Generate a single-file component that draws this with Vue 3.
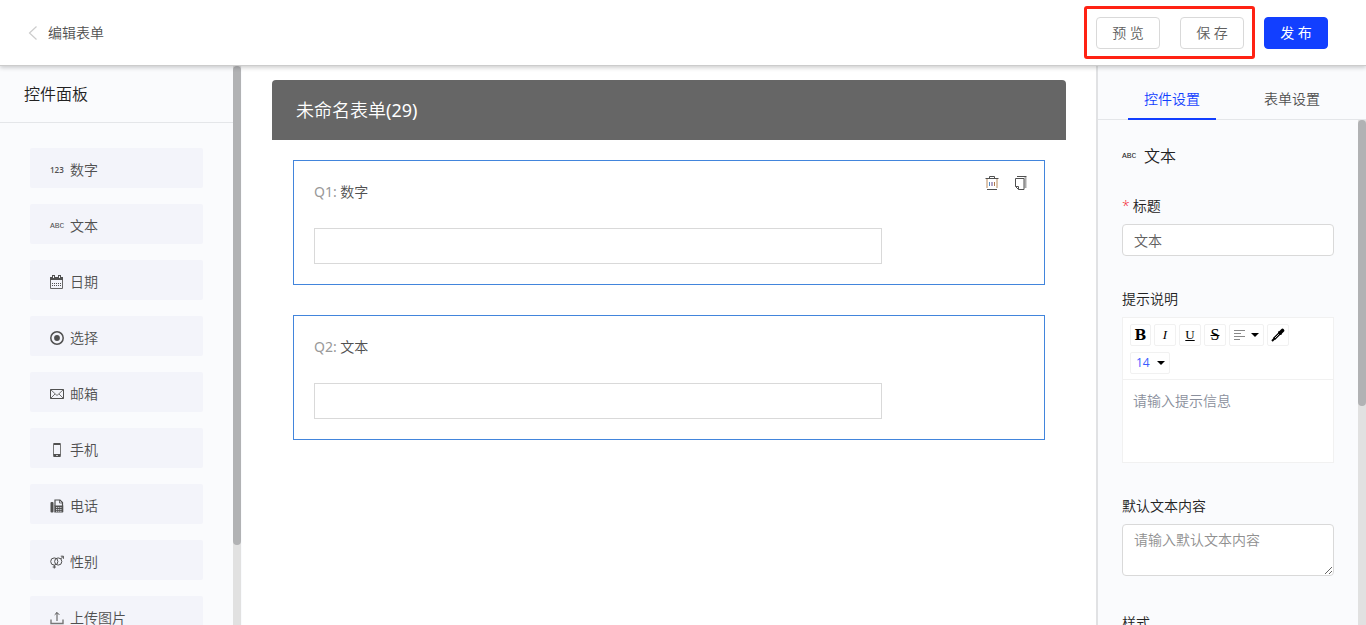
<script setup>
import { ref } from 'vue'

const controls = [
  { id: 'number', label: '数字' },
  { id: 'text', label: '文本' },
  { id: 'date', label: '日期' },
  { id: 'choice', label: '选择' },
  { id: 'mail', label: '邮箱' },
  { id: 'mobile', label: '手机' },
  { id: 'phone', label: '电话' },
  { id: 'gender', label: '性别' },
  { id: 'upload', label: '上传图片' }
]

const questions = [
  { no: 'Q1:', title: '数字', tools: true },
  { no: 'Q2:', title: '文本', tools: false }
]

const tab = ref('control')
const title = ref('文本')
const hint = ref('')
const preset = ref('')
const size = ref('14')
</script>

<template>
  <div class="page">
    <header class="topbar">
      <a class="back" href="#">
        <svg width="10" height="16" viewBox="0 0 10 16"><path d="M8.500 1.500L1.500 8l7 6.500" fill="none" stroke="#ccc" stroke-width="1.200" /></svg>
        <span>编辑表单</span>
      </a>
      <div class="actions">
        <div class="marked">
          <button type="button" class="btn">预 览</button>
          <button type="button" class="btn">保 存</button>
        </div>
        <button type="button" class="btn primary">发 布</button>
      </div>
    </header>

    <div class="body">
      <aside class="palette">
        <div class="palette-main">
          <h2 class="palette-title">控件面板</h2>
          <div class="palette-list">
            <button v-for="c in controls" :key="c.id" type="button" class="control">
              <span v-if="c.id === 'number'" class="glyph wide">123</span>
              <span v-else-if="c.id === 'text'" class="glyph">ABC</span>
              <svg v-else width="14" height="14" viewBox="0 0 14 14" fill="none" stroke="#505050">
                <template v-if="c.id === 'date'">
                  <path d="M.5 2.500h12v11H.5z" stroke="#666" />
                  <path d="M0 2h13v3H0z" fill="#505050" stroke="none" />
                  <path d="M3.500 0v3M9.500 0v3" stroke-width="3" />
                  <path d="M3.500 1v2M9.500 1v2" stroke="#f3f4fa" />
                  <path d="M2 8.500h9M2 10.500h9" stroke-dasharray="1 1" />
                </template>
                <template v-else-if="c.id === 'choice'">
                  <circle cx="7" cy="7" r="6.200" stroke-width="1.500" />
                  <circle cx="7" cy="7" r="2.900" fill="#505050" stroke="none" />
                </template>
                <template v-else-if="c.id === 'mail'">
                  <path d="M.5 2.500h13v9H.5z" />
                  <path d="M.5 2.500L7 8.500l6.500-6M.5 11.500L5 7M13.500 11.500L9 7" stroke-width=".8" />
                </template>
                <template v-else-if="c.id === 'mobile'">
                  <rect x="3.500" y=".5" width="7" height="13" rx="1" stroke="#777" />
                  <path d="M3.500 1h7" stroke-width="2" />
                  <path d="M3.500 12.500h7" stroke-width="3" />
                  <path d="M6.300 12.500h1.400" stroke="#f3f4fa" />
                </template>
                <template v-else-if="c.id === 'phone'">
                  <rect x=".5" y="3" width="3" height="10.500" rx="1" fill="#505050" stroke="none" />
                  <path d="M5 7V1h5l2.500 2.500V7" stroke-width="1.200" />
                  <path d="M9.500 1v3h3" stroke-width=".8" />
                  <path d="M4.300 6.500h9V13l-.6.600H4.300z" fill="#505050" stroke="none" />
                  <path d="M6 8.500h5.500M6 10.500h5.500M6 12.300h5.500" stroke="#f3f4fa" stroke-width=".8" stroke-dasharray="1.300 .8" />
                </template>
                <template v-else-if="c.id === 'gender'">
                  <circle cx="4.300" cy="6.500" r="3.600" />
                  <circle cx="8.200" cy="6.500" r="3.600" />
                  <path d="M4.300 10v3.500M2.700 12h3.200M10.700 4L13 1.500M10.800 1.200h2.600v2.600" />
                </template>
                <template v-else>
                  <path d="M1 8.500v4h12v-4" stroke="#777" stroke-width="1.400" />
                  <path d="M7 10V1.500M4.700 3.800L7 1.500l2.300 2.300" />
                </template>
              </svg>
              <span>{{ c.label }}</span>
            </button>
          </div>
        </div>
        <div class="track"><div class="thumb thumb-left"></div></div>
      </aside>

      <main class="canvas">
        <h1 class="form-title">未命名表单<span class="count">(29)</span></h1>
        <section v-for="q in questions" :key="q.no" class="card">
          <div class="card-head">
            <label :for="q.no"><span class="no">{{ q.no }}</span> {{ q.title }}</label>
            <div v-if="q.tools" class="card-tools">
              <button type="button" aria-label="删除">
                <svg width="14" height="14" viewBox="0 0 14 14" fill="none" stroke="#505050">
                  <path d="M.5 2.500h13M4.500 2V.5h5V2" />
                  <path d="M2 3v9M12 3v9" stroke="#b98a5c" /><path d="M2 13.500h10" />
                  <path d="M4.500 6v4" stroke="#4f8bc9" /><path d="M7 6v4" stroke="#6a4a8c" /><path d="M9.500 6v4" stroke="#b07a4c" />
                </svg>
              </button>
              <button type="button" aria-label="复制">
                <svg width="14" height="14" viewBox="0 0 14 14" fill="none" stroke="#505050">
                  <path d="M3 .5h9.500" /><path d="M11.500 1v11" stroke="#aaa" stroke-width="2" />
                  <path d="M1.500 2.500h8.500v11H4.500l-3-3z" fill="#fff" />
                  <path d="M1.500 10.500h3v3" />
                </svg>
              </button>
            </div>
          </div>
          <input :id="q.no" class="answer" type="text" />
        </section>
      </main>

      <aside class="settings">
        <nav class="tabs">
          <button type="button" :class="{ active: tab === 'control' }" @click="tab = 'control'">控件设置</button>
          <button type="button" :class="{ active: tab === 'form' }" @click="tab = 'form'">表单设置</button>
        </nav>
        <div class="settings-body">
          <div class="settings-main">
            <h3 class="kind"><span class="glyph">ABC</span>文本</h3>

            <div class="field">
              <label for="title"><span class="star">*</span>标题</label>
              <input id="title" v-model="title" class="box" type="text" />
            </div>

            <div class="field">
              <label for="hint">提示说明</label>
              <div class="editor">
                <div class="toolbar">
                  <button type="button" class="tool bold">B</button>
                  <button type="button" class="tool italic">I</button>
                  <button type="button" class="tool under">U</button>
                  <button type="button" class="tool strike">S</button>
                  <button type="button" class="tool menu" aria-label="对齐">
                    <svg width="26" height="12" viewBox="0 0 26 12"><path d="M0 1.500h11M0 4.500h7M0 7.500h11M0 10.500h6" stroke="#888" /><path d="M17 4h8l-4 4z" fill="#000" /></svg>
                  </button>
                  <button type="button" class="tool" aria-label="颜色">
                    <svg width="14" height="14" viewBox="0 0 14 14"><path d="M3 11l6.500-6.500" stroke="#000" stroke-width="3" /><path d="M4 10l5-5" stroke="#fff" stroke-width=".8" /><path d="M9 5l2.500-2.500" stroke="#000" stroke-width="3.600" stroke-linecap="round" /><path d="M7.500 3.500l3 3" stroke="#000" stroke-width="1.500" /><path d="M1 13l2.500-2.500" stroke="#000" stroke-width="2" /></svg>
                  </button>
                  <div class="size">
                    <select v-model="size" aria-label="字号"><option>14</option><option>16</option></select>
                    <svg width="8" height="4" viewBox="0 0 8 4"><path d="M0 0h8L4 4z" /></svg>
                  </div>
                </div>
                <textarea id="hint" v-model="hint" class="hint" placeholder="请输入提示信息"></textarea>
              </div>
            </div>

            <div class="field">
              <label for="preset">默认文本内容</label>
              <textarea id="preset" v-model="preset" class="box area" placeholder="请输入默认文本内容"></textarea>
            </div>

            <div class="field"><h4>样式</h4></div>
          </div>
          <div class="track"><div class="thumb thumb-right"></div></div>
        </div>
      </aside>
    </div>
  </div>
</template>

<style>
body {
  margin: 0;
}
</style>

<style scoped>
.page {
  display: flex;
  flex-direction: column;
  height: 100vh;
  overflow: hidden;
  background: #fff;
  color: #505050;
  font: 350 14px/22px "Open Sans", "Noto Sans CJK SC", sans-serif;
}
.page *, .page *::before, .page *::after {
  box-sizing: border-box;
}
button, input, textarea, select {
  margin: 0;
  padding: 0;
  border: 0;
  background: none;
  color: inherit;
  font: inherit;
  outline: none;
}
h1, h2, h3, h4 {
  margin: 0;
  font-weight: 350;
}
svg {
  display: block;
  flex: none;
}
.topbar {
  position: relative;
  z-index: 1;
  flex: none;
  display: flex;
  align-items: center;
  justify-content: space-between;
  height: 66px;
  padding: 0 38px 0 28px;
  border-bottom: 1px solid #ccc;
  box-shadow: 0 2px 4px rgba(0, 0, 0, .18);
  background: #fff;
}
.back {
  display: flex;
  align-items: center;
  gap: 10px;
  color: #505050;
  text-decoration: none;
}
.actions, .marked {
  display: flex;
  gap: 20px;
}
.marked {
  position: relative;
}
.marked::after {
  content: "";
  position: absolute;
  inset: -11px -11px -10px -12px;
  border: 3px solid #ff2213;
  border-radius: 3px;
  pointer-events: none;
}
.btn {
  width: 64px;
  height: 32px;
  border: 1px solid #d9d9d9;
  border-radius: 4px;
  background: #fff;
  color: #606060;
}
.primary {
  border-color: #123fff;
  background: #123fff;
  color: #fff;
  font-weight: 400;
}
.body {
  flex: 1;
  min-height: 0;
  display: flex;
}
.palette {
  flex: none;
  display: flex;
  width: 242px;
  padding-right: 1px;
  background: #fafbfd;
}
.palette-main {
  flex: 1;
  overflow: hidden;
}
.palette-title {
  height: 57px;
  padding-left: 24px;
  border-bottom: 1px solid #e4e6e9;
  color: #222;
  font-size: 16px;
  line-height: 56px;
}
.palette-list {
  display: flex;
  flex-direction: column;
  gap: 16px;
  padding: 25px 30px;
}
.control {
  display: flex;
  align-items: center;
  gap: 6px;
  height: 40px;
  padding: 4px 20px 0;
  border-radius: 2px;
  background: #f3f4fa;
  text-align: left;
}
.glyph {
  flex: none;
  width: 14px;
  font: 400 8px/14px "Liberation Mono", monospace;
  white-space: nowrap;
}
.wide {
  font-family: "Open Sans", sans-serif;
  font-weight: 600;
}
.track {
  flex: none;
  width: 8px;
  background: #e1e1e1;
}
.thumb {
  border-radius: 4px;
  background: #b1b2b4;
}
.thumb-left {
  height: 85.7%;
}
.thumb-right {
  height: 56.6%;
}
.canvas {
  flex: 1;
  min-width: 0;
  padding: 14px 30px;
}
.form-title {
  height: 60px;
  padding-left: 24px;
  border-radius: 4px 4px 0 0;
  background: #666;
  color: #fff;
  font-size: 18px;
  line-height: 60px;
}
.count, .no {
  font-family: "Noto Sans", sans-serif;
  font-weight: 400;
}
.card {
  margin: 20px 21px 30px;
  padding: 20px;
  border: 1px solid #4285dc;
}
.card + .card {
  margin-top: 0;
}
.card-head {
  display: flex;
  justify-content: space-between;
  height: 47px;
}
.no {
  color: #999;
}
.card-tools {
  display: flex;
  align-items: flex-start;
  gap: 15px;
  margin: -5px -4px 0 0;
}
.answer {
  display: block;
  width: 80%;
  height: 36px;
  padding: 0 10px;
  border: 1px solid #d9d9d9;
  background: #fff;
}
.settings {
  flex: none;
  display: flex;
  flex-direction: column;
  width: 270px;
  border-left: 2px solid #e1e2e4;
  background: #fafbfd;
}
.tabs {
  flex: none;
  display: flex;
  gap: 32px;
  height: 54px;
  padding-left: 30px;
  border-bottom: 1px solid #e4e6e9;
}
.tabs button {
  height: 54px;
  padding: 14px 16px 0;
  border-bottom: 2px solid transparent;
}
.tabs .active {
  border-color: #123fff;
  color: #123fff;
}
.settings-body {
  flex: 1;
  min-height: 0;
  display: flex;
}
.settings-main {
  flex: 1;
  min-width: 0;
  overflow: hidden;
  padding: 24px;
  color: #222;
}
.kind {
  display: flex;
  align-items: center;
  gap: 8px;
  height: 24px;
  font-size: 16px;
  line-height: 24px;
}
.field {
  margin-top: 32px;
}
.kind + .field {
  margin-top: 27px;
}
.field label, .field h4 {
  display: block;
  margin-bottom: 7px;
  font-size: 14px;
  line-height: 22px;
}
.star {
  margin-right: 3px;
  color: #f5222d;
}
.box {
  display: block;
  width: 100%;
  height: 32px;
  padding: 0 11px;
  border: 1px solid #d9d9d9;
  border-radius: 4px;
  background: #fff;
  color: #606060;
}
.area {
  height: 52px;
  margin-bottom: 36px;
  padding: 4px 11px;
  resize: vertical;
}
.area::placeholder {
  color: #909090;
}
.editor {
  border: 1px solid #f1f1f1;
  background: #fff;
}
.toolbar {
  display: flex;
  flex-wrap: wrap;
  gap: 6px 3px;
  padding: 6px 7px 5px;
  border-bottom: 1px solid #f1f1f1;
}
.tool, .size {
  display: flex;
  align-items: center;
  justify-content: center;
  width: 22px;
  height: 22px;
  border: 1px solid #f1f1f1;
  border-radius: 2px;
  color: #000;
  font: 400 13px/20px "Liberation Serif", serif;
}
.bold {
  width: 21px;
  font: 700 14px/20px "DejaVu Serif", serif;
}
.italic {
  font-style: italic;
}
.under {
  text-decoration: underline;
}
.strike {
  font-size: 16px;
  text-decoration: line-through;
}
.menu {
  width: 35px;
}
.size {
  justify-content: space-between;
  width: 40px;
  padding: 0 4px 0 5px;
}
.size select {
  width: 18px;
  appearance: none;
  color: #3a5cff;
  font: 400 12px/20px "Open Sans", sans-serif;
}
.hint {
  display: block;
  width: 100%;
  height: 82px;
  padding: 10px;
  resize: none;
}
.hint::placeholder {
  color: #8a8f9c;
}
.field:last-child {
  margin-top: 0;
}
</style>
